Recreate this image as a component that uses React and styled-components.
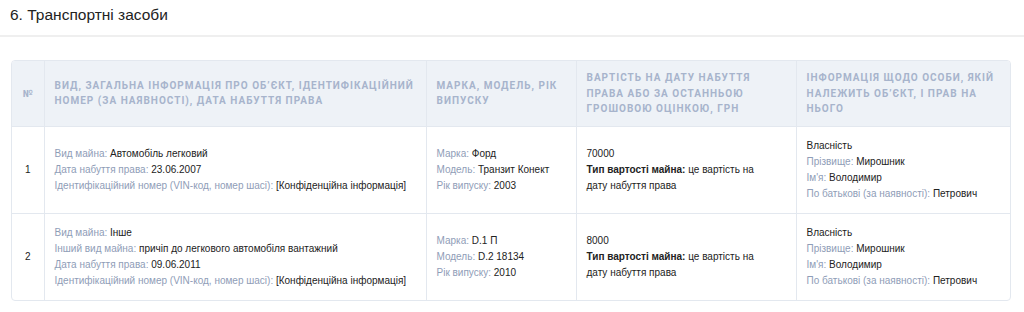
import React from 'react';
import styled, { createGlobalStyle } from 'styled-components';

const GlobalStyle = createGlobalStyle`
    body {
        margin: 0;
        background: #fff;
        font-family: "Liberation Sans", Arial, sans-serif;
        color: #222;
    }
`;

const Section = styled.section`
    width: 1024px;
`;

const TitleBar = styled.div`
    padding: 5px 10px 0;
    height: 37px;
    box-sizing: border-box;
    border-bottom: 2px solid #efefef;
`;

const Title = styled.h2`
    margin: 0;
    font-size: 15.5px;
    font-weight: normal;
    line-height: 20px;
    color: #222;
`;

const TableWrap = styled.div`
    margin: 23px 13px 0 11px;
    border: 1px solid #e3e8ef;
    border-radius: 4px;
    overflow: hidden;
`;

const Table = styled.table`
    width: 100%;
    border-collapse: collapse;
    table-layout: fixed;
`;

const HeadCell = styled.th`
    width: ${p => p.w}px;
    height: 65px;
    box-sizing: border-box;
    background: #eef2f7;
    padding: 0 10px;
    text-align: ${p => (p.center ? 'center' : 'left')};
    vertical-align: middle;
    font-family: Roboto, "Liberation Sans", Arial, sans-serif;
    font-size: 10px;
    font-weight: bold;
    line-height: 15.5px;
    letter-spacing: 1px;
    text-transform: uppercase;
    color: #a7b4cc;
    border-left: 1px solid #e3e8ef;
    &:first-child {
        border-left: none;
        padding: 0;
        letter-spacing: 0;
    }
`;

const Row = styled.tr`
    border-top: 1px solid #e3e8ef;
`;

const Cell = styled.td`
    height: 85px;
    box-sizing: border-box;
    padding: 11px 10px 11px;
    vertical-align: middle;
    font-size: 10px;
    line-height: 16px;
    color: #222;
    border-left: 1px solid #e3e8ef;
    &:first-child {
        border-left: none;
        padding: 10px 0 10px;
        text-align: center;
    }
`;

const Line = styled.div`
    white-space: nowrap;
`;

const Label = styled.span`
    color: #8f9db7;
`;

const Strong = styled.b`
    font-weight: bold;
`;

const Wrap = styled.div`
    max-width: 176px;
`;

const columns = [
    { title: '№', w: 32, center: true },
    { title: 'Вид, загальна інформація про об\u2019єкт, ідентифікаційний номер (за наявності), дата набуття права', w: 382 },
    { title: 'Марка, модель, рік випуску', w: 150 },
    { title: 'Вартість на дату набуття права або за останньою грошовою оцінкою, грн', w: 220 },
    { title: 'Інформація щодо особи, якій належить об\u2019єкт, і прав на нього', w: 215 },
];

const rows = [
    {
        n: 1,
        info: [
            ['Вид майна', 'Автомобіль легковий'],
            ['Дата набуття права', '23.06.2007'],
            ['Ідентифікаційний номер (VIN-код, номер шасі)', '[Конфіденційна інформація]'],
        ],
        car: [['Марка', 'Форд'], ['Модель', 'Транзит Конект'], ['Рік випуску', '2003']],
        price: '70000',
    },
    {
        n: 2,
        info: [
            ['Вид майна', 'Інше'],
            ['Інший вид майна', 'причіп до легкового автомобіля вантажний'],
            ['Дата набуття права', '09.06.2011'],
            ['Ідентифікаційний номер (VIN-код, номер шасі)', '[Конфіденційна інформація]'],
        ],
        car: [['Марка', 'D.1 П'], ['Модель', 'D.2 18134'], ['Рік випуску', '2010']],
        price: '8000',
    },
];

const owner = [['Прізвище', 'Мирошник'], ['Ім\'я', 'Володимир'], ['По батькові (за наявності)', 'Петрович']];

function Pairs({ items }) {
    return items.map(([k, v]) => (
        <Line key={k}>
            <Label>{k}:</Label> {v}
        </Line>
    ));
}

export default function App() {
    return (
        <Section>
            <GlobalStyle />
            <TitleBar>
                <Title>6. Транспортні засоби</Title>
            </TitleBar>
            <TableWrap>
                <Table>
                    <thead>
                        <tr>
                            {columns.map(c => (
                                <HeadCell key={c.title} w={c.w} center={c.center}>{c.title}</HeadCell>
                            ))}
                        </tr>
                    </thead>
                    <tbody>
                        {rows.map(r => (
                            <Row key={r.n}>
                                <Cell>{r.n}</Cell>
                                <Cell><Pairs items={r.info} /></Cell>
                                <Cell><Pairs items={r.car} /></Cell>
                                <Cell>
                                    <Line>{r.price}</Line>
                                    <Wrap><Strong>Тип вартості майна:</Strong> це вартість на дату набуття права</Wrap>
                                </Cell>
                                <Cell>
                                    <Line>Власність</Line>
                                    <Pairs items={owner} />
                                </Cell>
                            </Row>
                        ))}
                    </tbody>
                </Table>
            </TableWrap>
        </Section>
    );
}
